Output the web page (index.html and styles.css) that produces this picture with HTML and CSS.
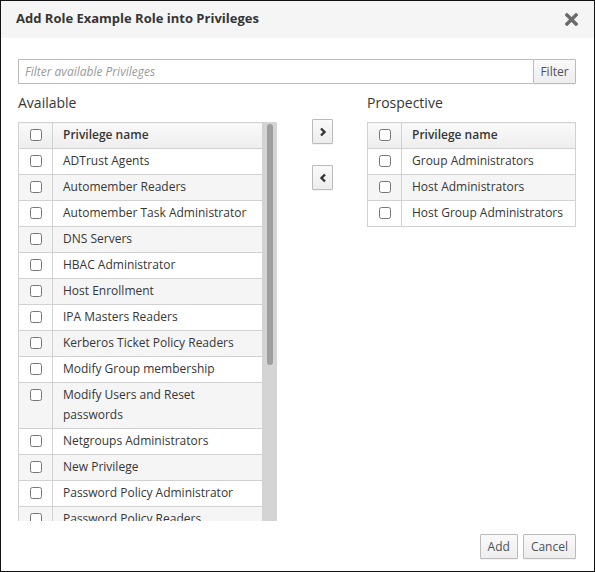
FILE: index.html
```html
<!DOCTYPE html>
<html>
<head>
<meta charset="utf-8">
<link rel="stylesheet" href="styles.css">
</head>
<body>
<div class="dialog">
  <div class="dlg-header">
    <h4 class="dlg-title">Add Role Example Role into Privileges</h4>
    <button class="close" aria-label="Close">
      <svg width="13" height="13" viewBox="0 0 13 13"><path d="M2 2 L11 11 M11 2 L2 11" stroke="#6b6b6b" stroke-width="3.4" stroke-linecap="square"/></svg>
    </button>
  </div>
  <div class="dlg-body">
    <div class="filter-row">
      <input class="filter-input" type="text" placeholder="Filter available Privileges">
      <button class="btn filter-btn">Filter</button>
    </div>
    <div class="adder">
      <div class="col col-avail">
        <h3 class="col-title">Available</h3>
        <div class="list-box">
          <div class="list-scroll">
            <table class="grid">
              <thead><tr><th class="cb"><input type="checkbox"></th><th>Privilege name</th></tr></thead>
              <tbody>
                <tr><td class="cb"><input type="checkbox"></td><td>ADTrust Agents</td></tr>
                <tr><td class="cb"><input type="checkbox"></td><td>Automember Readers</td></tr>
                <tr><td class="cb"><input type="checkbox"></td><td>Automember Task Administrator</td></tr>
                <tr><td class="cb"><input type="checkbox"></td><td>DNS Servers</td></tr>
                <tr><td class="cb"><input type="checkbox"></td><td>HBAC Administrator</td></tr>
                <tr><td class="cb"><input type="checkbox"></td><td>Host Enrollment</td></tr>
                <tr><td class="cb"><input type="checkbox"></td><td>IPA Masters Readers</td></tr>
                <tr><td class="cb"><input type="checkbox"></td><td>Kerberos Ticket Policy Readers</td></tr>
                <tr><td class="cb"><input type="checkbox"></td><td>Modify Group membership</td></tr>
                <tr><td class="cb"><input type="checkbox"></td><td>Modify Users and Reset passwords</td></tr>
                <tr><td class="cb"><input type="checkbox"></td><td>Netgroups Administrators</td></tr>
                <tr><td class="cb"><input type="checkbox"></td><td>New Privilege</td></tr>
                <tr><td class="cb"><input type="checkbox"></td><td>Password Policy Administrator</td></tr>
                <tr><td class="cb"><input type="checkbox"></td><td>Password Policy Readers</td></tr>
                <tr><td class="cb"><input type="checkbox"></td><td>Replication Administrators</td></tr>
                <tr><td class="cb"><input type="checkbox"></td><td>Service Administrators</td></tr>
                <tr><td class="cb"><input type="checkbox"></td><td>Stage User Administrators</td></tr>
              </tbody>
            </table>
          </div>
          <div class="scrollbar"><div class="thumb"></div></div>
        </div>
      </div>
      <div class="col col-mid">
        <button class="btn arrow" aria-label="Add">
          <svg width="8" height="10" viewBox="0 0 8 10"><path d="M2 1.5 L5.5 5 L2 8.5" fill="none" stroke="#363636" stroke-width="2.4"/></svg>
        </button>
        <button class="btn arrow" aria-label="Remove">
          <svg width="8" height="10" viewBox="0 0 8 10"><path d="M6 1.5 L2.5 5 L6 8.5" fill="none" stroke="#363636" stroke-width="2.4"/></svg>
        </button>
      </div>
      <div class="col col-prosp">
        <h3 class="col-title">Prospective</h3>
        <table class="grid">
          <thead><tr><th class="cb"><input type="checkbox"></th><th>Privilege name</th></tr></thead>
          <tbody>
            <tr><td class="cb"><input type="checkbox"></td><td>Group Administrators</td></tr>
            <tr><td class="cb"><input type="checkbox"></td><td>Host Administrators</td></tr>
            <tr><td class="cb"><input type="checkbox"></td><td>Host Group Administrators</td></tr>
          </tbody>
        </table>
      </div>
    </div>
  </div>
  <div class="dlg-footer">
    <button class="btn">Add</button>
    <button class="btn">Cancel</button>
  </div>
</div>
</body>
</html>
```

FILE: styles.css
```css
* { box-sizing: border-box; }
html, body { margin: 0; padding: 0; background: #fff; }
body {
  font-family: "Open Sans", "Liberation Sans", sans-serif;
  font-size: 12px;
  color: #363636;
}
.dialog {
  width: 595px;
  height: 572px;
  border: 1px solid #111;
  display: flex;
  flex-direction: column;
  background: #fff;
}
.dlg-header {
  height: 37px;
  background: #f5f5f5;
  display: flex;
  align-items: center;
  justify-content: space-between;
  padding: 0 16px 0 15px;
  flex: none;
}
.dlg-title {
  margin: 0 0 3px 0;
  font-size: 13px;
  font-weight: 700;
  color: #363636;
}
.close {
  border: 0;
  background: none;
  padding: 0;
  width: 13px;
  height: 13px;
  display: flex;
}
.dlg-body {
  flex: 1;
  padding: 21px 18px 0 17px;
  min-height: 0;
}
.filter-row {
  display: flex;
  height: 25px;
}
.filter-input {
  flex: 1;
  height: 25px;
  border: 1px solid #bbb;
  border-right: 0;
  padding: 0 6px;
  font-family: "Open Sans", "Liberation Sans", sans-serif;
  font-size: 12px;
  font-style: italic;
  color: #363636;
  outline: none;
}
.filter-input::placeholder { color: #999; font-style: italic; }
.btn {
  font-family: "Open Sans", "Liberation Sans", sans-serif;
  font-size: 12px;
  color: #4d5258;
  background: linear-gradient(#fafafa, #ededed);
  border: 1px solid #bbb;
  border-radius: 1px;
  padding: 0 7px;
  height: 25px;
  margin: 0;
  display: inline-flex;
  align-items: center;
  justify-content: center;
  box-shadow: 0 1px 1px rgba(3,3,3,0.05);
}
.filter-btn { width: 43px; }
.adder { display: flex; }
.col-title {
  margin: 8px 0 8px 0;
  line-height: 22px;
  font-size: 14px;
  font-weight: 400;
  color: #363636;
}
.col-avail { width: 259px; }
.col-mid {
  width: 90px;
  display: flex;
  flex-direction: column;
  align-items: center;
  padding-top: 35px;
  padding-left: 1px;
  gap: 21px;
}
.col-prosp { width: 209px; }
.arrow {
  width: 21px;
  height: 25px;
  padding: 0;
}
.list-box {
  display: flex;
  height: 399px;
}
.list-scroll {
  width: 245px;
  height: 399px;
  overflow: hidden;
}
.scrollbar {
  width: 14px;
  height: 399px;
  background: #d4d4d4;
  padding: 2px 4px 0 4px;
}
.thumb {
  height: 241px;
  background: #9e9e9e;
  border-radius: 3px;
}
.grid {
  width: 100%;
  border-collapse: collapse;
  border: 1px solid #d1d1d1;
}
.grid th, .grid td {
  border: 1px solid #d1d1d1;
  padding: 2px 10px 3px 10px;
  line-height: 20px;
  text-align: left;
  vertical-align: top;
}
.grid th {
  font-weight: 600;
  background: linear-gradient(#fafafa, #ededed);
}
.grid td.cb, .grid th.cb {
  width: 34px;
  padding: 2px 0 3px 0;
  text-align: center;
}
.grid tbody tr:nth-child(even) td { background: #f5f5f5; }
.grid input[type="checkbox"] {
  margin: 4px 0 0 0;
  width: 12px;
  height: 12px;
  vertical-align: top;
}
.dlg-footer {
  display: flex;
  justify-content: flex-end;
  gap: 5px;
  padding: 0 18px 12px 0;
  flex: none;
}
```
